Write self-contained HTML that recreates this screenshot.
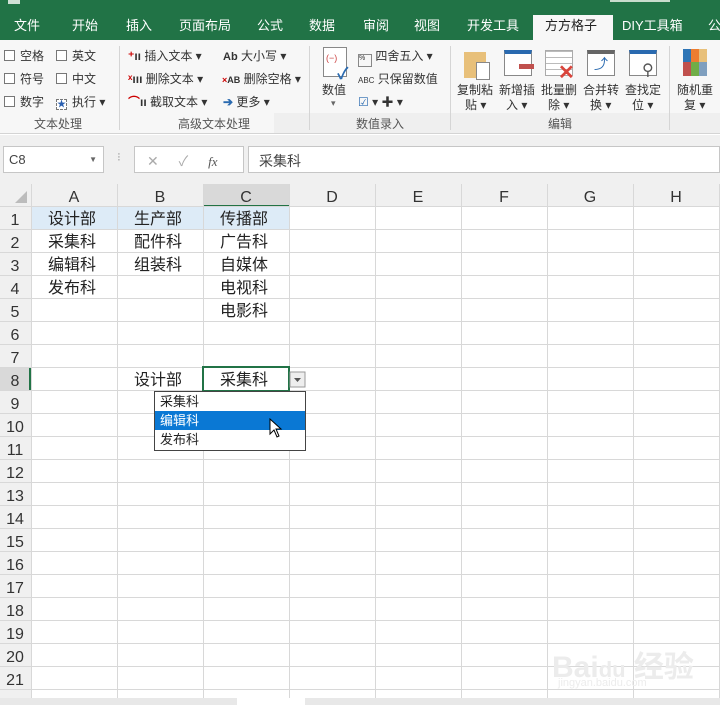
<!DOCTYPE html><html><head><meta charset="utf-8"><style>
*{margin:0;padding:0;box-sizing:border-box}
body{width:720px;height:705px;overflow:hidden;background:#fff;font-family:"Liberation Sans","Noto Sans CJK SC",sans-serif;position:relative;font-size:12px;color:#222}
.a{position:absolute}
.tab{position:absolute;top:8px;height:32px;line-height:36px;color:#fff;font-size:13px}
.rb{font-size:12px;color:#333;position:absolute;white-space:nowrap}
.cb{display:inline-block;width:11px;height:11px;border:1px solid #777;vertical-align:-1px;margin-right:5px;background:#fff}
.gl{position:absolute;top:115px;font-size:12px;color:#555}
.sep{position:absolute;top:46px;width:1px;height:84px;background:#d5d5d5}
.cell{position:absolute;font-size:16px;color:#222;height:23px;line-height:23px}
</style></head><body>
<div class="a" style="left:0;top:0;width:720px;height:40px;background:#217346"></div>
<div class="a" style="left:8px;top:0;width:12px;height:4px;background:#cfe0d5"></div>
<div class="a" style="left:610px;top:0;width:60px;height:2px;background:#c8dccd"></div>
<div class="tab" style="left:14px">文件</div>
<div class="tab" style="left:72px">开始</div>
<div class="tab" style="left:126px">插入</div>
<div class="tab" style="left:179px">页面布局</div>
<div class="tab" style="left:257px">公式</div>
<div class="tab" style="left:309px">数据</div>
<div class="tab" style="left:363px">审阅</div>
<div class="tab" style="left:414px">视图</div>
<div class="tab" style="left:467px">开发工具</div>
<div class="a" style="left:533px;top:15px;width:80px;height:27px;background:#f7f7f7"></div>
<div class="tab" style="left:545px;color:#222">方方格子</div>
<div class="tab" style="left:622px">DIY工具箱</div>
<div class="tab" style="left:708px">公</div>
<div class="a" style="left:0;top:40px;width:720px;height:94px;background:#f7f7f7;border-bottom:1px solid #d4d4d4"></div>
<div class="a" style="left:274px;top:113px;width:446px;height:20px;background:#efefef"></div>
<div class="rb" style="left:4px;top:47px"><span class="cb"></span>空格</div>
<div class="rb" style="left:4px;top:70px"><span class="cb"></span>符号</div>
<div class="rb" style="left:4px;top:93px"><span class="cb"></span>数字</div>
<div class="rb" style="left:56px;top:47px"><span class="cb"></span>英文</div>
<div class="rb" style="left:56px;top:70px"><span class="cb"></span>中文</div>
<div class="rb" style="left:56px;top:93px"><span class="cb" style="border-style:dashed;color:#2a5fb0;font-size:9px;line-height:9px;text-align:center">★</span>执行 ▾</div>
<div class="sep" style="left:119px"></div>
<div class="rb" style="left:128px;top:47px"><b style="color:#c00">⁺</b><b>ıı</b> 插入文本 ▾</div>
<div class="rb" style="left:128px;top:70px"><b style="color:#c00">ˣ</b><b>ııı</b> 删除文本 ▾</div>
<div class="rb" style="left:128px;top:93px"><b style="color:#c00">⌒</b><b>ıı</b> 截取文本 ▾</div>
<div class="rb" style="left:223px;top:47px"><b style="font-size:11px">Ab</b> 大小写 ▾</div>
<div class="rb" style="left:222px;top:70px"><b style="font-size:9px"><span style="color:#c00">×</span>AB</b> 删除空格 ▾</div>
<div class="rb" style="left:223px;top:93px"><b style="color:#2a6ab0">➔</b> 更多 ▾</div>
<div class="sep" style="left:309px"></div>
<div class="a" style="left:323px;top:47px;width:24px;height:30px;border:1px solid #888;background:#fff;color:#c44;font-size:9px;padding:5px 2px">(−)</div>
<div class="a" style="left:337px;top:60px;color:#2a6ab0;font-size:16px;font-weight:bold">✓</div>
<div class="rb" style="left:322px;top:81px">数值</div>
<div class="rb" style="left:331px;top:98px;font-size:9px;color:#666">▾</div>
<div class="rb" style="left:358px;top:47px"><span style="display:inline-block;width:14px;height:13px;border:1px solid #888;font-size:7px">%</span> 四舍五入 ▾</div>
<div class="rb" style="left:358px;top:70px"><span style="font-size:8px">ABC</span> 只保留数值</div>
<div class="rb" style="left:358px;top:93px"><span style="color:#2a6ab0">☑</span> ▾ <b>✚</b> ▾</div>
<div class="sep" style="left:450px"></div>
<div class="a" style="left:464px;top:52px;width:22px;height:26px;background:#e8c07a"></div>
<div class="a" style="left:476px;top:62px;width:14px;height:18px;background:#fff;border:1px solid #888"></div>
<div class="a" style="left:504px;top:50px;width:28px;height:26px;border:1px solid #888;border-top:4px solid #2a6ab0;background:#fff"></div>
<div class="a" style="left:519px;top:64px;width:15px;height:5px;background:#c0504d"></div>
<div class="a" style="left:545px;top:50px;width:28px;height:26px;border:1px solid #aaa;background:repeating-linear-gradient(0deg,#fff 0 5px,#bbb 5px 6px)"></div>
<div class="a" style="left:558px;top:60px;color:#d9443b;font-size:20px;font-weight:bold">✕</div>
<div class="a" style="left:587px;top:50px;width:28px;height:26px;border:1px solid #888;border-top:4px solid #666;background:#fff;color:#2a6ab0;font-size:14px;text-align:center">⤴</div>
<div class="a" style="left:629px;top:50px;width:28px;height:26px;border:1px solid #888;border-top:4px solid #2a6ab0;background:#fff"></div>
<div class="a" style="left:642px;top:60px;font-size:16px;color:#555">⚲</div>
<div class="rb" style="left:457px;top:81px">复制粘</div><div class="rb" style="left:465px;top:96px">贴 ▾</div>
<div class="rb" style="left:499px;top:81px">新增插</div><div class="rb" style="left:506px;top:96px">入 ▾</div>
<div class="rb" style="left:541px;top:81px">批量删</div><div class="rb" style="left:548px;top:96px">除 ▾</div>
<div class="rb" style="left:583px;top:81px">合并转</div><div class="rb" style="left:590px;top:96px">换 ▾</div>
<div class="rb" style="left:625px;top:81px">查找定</div><div class="rb" style="left:632px;top:96px">位 ▾</div>
<div class="sep" style="left:669px"></div>
<div class="a" style="left:683px;top:49px;width:24px;height:27px;background:linear-gradient(90deg,#2e75b6 0 33%,#ed7d31 33% 66%,#e8c07a 66%)"></div>
<div class="a" style="left:683px;top:62px;width:24px;height:14px;background:linear-gradient(90deg,#c0504d 0 33%,#70ad47 33% 66%,#7f9fbf 66%)"></div>
<div class="rb" style="left:677px;top:81px">随机重</div><div class="rb" style="left:684px;top:96px">复 ▾</div>
<div class="gl" style="left:34px">文本处理</div>
<div class="gl" style="left:178px">高级文本处理</div>
<div class="gl" style="left:356px">数值录入</div>
<div class="gl" style="left:548px">编辑</div>
<div class="a" style="left:0;top:135px;width:720px;height:50px;background:#f0f0f0"></div>
<div class="a" style="left:3px;top:146px;width:101px;height:27px;background:#fff;border:1px solid #c6c6c6;padding:5px 5px;font-size:13px;color:#444">C8<span style="position:absolute;right:6px;font-size:8px;color:#666;top:8px">▼</span></div>
<div class="a" style="left:117px;top:150px;color:#aaa">⁝</div>
<div class="a" style="left:134px;top:146px;width:110px;height:27px;background:#fff;border:1px solid #c6c6c6;color:#aaa;font-size:14px;padding:4px 12px;word-spacing:16px">✕ ✓ <i style="color:#555;font-family:'Liberation Serif';font-size:13px">fx</i></div>
<div class="a" style="left:248px;top:146px;width:472px;height:27px;background:#fff;border:1px solid #c6c6c6;padding:4px 10px;font-size:14px;color:#444">采集科</div>
<svg class="a" style="left:0;top:184px" width="720" height="521">
<rect width="720" height="521" fill="#fff"/>
<rect x="0" y="0" width="720" height="23" fill="#f0f0f0"/>
<rect x="0" y="0" width="31" height="521" fill="#f0f0f0"/>
<rect x="203" y="0" width="86" height="23" fill="#d9d9d9"/>
<rect x="203" y="21" width="86" height="2" fill="#217346"/>
<rect x="0" y="184" width="31" height="23" fill="#d9d9d9"/>
<rect x="29" y="184" width="2" height="23" fill="#217346"/>
<rect x="31" y="23" width="258" height="23" fill="#ddebf7"/>
<polygon points="27,19 27,7 15,19" fill="#bcbcbc"/>
<g stroke="#d8d8d8" stroke-width="1">
<line x1="0" x2="720" y1="22.5" y2="22.5"/>
<line x1="31.5" x2="31.5" y1="0" y2="521"/>
<line x1="117.5" x2="117.5" y1="0" y2="521"/><line x1="203.5" x2="203.5" y1="0" y2="521"/><line x1="289.5" x2="289.5" y1="0" y2="521"/><line x1="375.5" x2="375.5" y1="0" y2="521"/><line x1="461.5" x2="461.5" y1="0" y2="521"/><line x1="547.5" x2="547.5" y1="0" y2="521"/><line x1="633.5" x2="633.5" y1="0" y2="521"/><line x1="719.5" x2="719.5" y1="0" y2="521"/>
<line x1="0" x2="720" y1="45.5" y2="45.5"/><line x1="0" x2="720" y1="68.5" y2="68.5"/><line x1="0" x2="720" y1="91.5" y2="91.5"/><line x1="0" x2="720" y1="114.5" y2="114.5"/><line x1="0" x2="720" y1="137.5" y2="137.5"/><line x1="0" x2="720" y1="160.5" y2="160.5"/><line x1="0" x2="720" y1="183.5" y2="183.5"/><line x1="0" x2="720" y1="206.5" y2="206.5"/><line x1="0" x2="720" y1="229.5" y2="229.5"/><line x1="0" x2="720" y1="252.5" y2="252.5"/><line x1="0" x2="720" y1="275.5" y2="275.5"/><line x1="0" x2="720" y1="298.5" y2="298.5"/><line x1="0" x2="720" y1="321.5" y2="321.5"/><line x1="0" x2="720" y1="344.5" y2="344.5"/><line x1="0" x2="720" y1="367.5" y2="367.5"/><line x1="0" x2="720" y1="390.5" y2="390.5"/><line x1="0" x2="720" y1="413.5" y2="413.5"/><line x1="0" x2="720" y1="436.5" y2="436.5"/><line x1="0" x2="720" y1="459.5" y2="459.5"/><line x1="0" x2="720" y1="482.5" y2="482.5"/><line x1="0" x2="720" y1="505.5" y2="505.5"/>
</g>
<g font-family="Liberation Sans" font-size="16" fill="#333" text-anchor="middle">
<text x="74" y="18">A</text><text x="160" y="18">B</text><text x="246" y="18">C</text><text x="332" y="18">D</text><text x="418" y="18">E</text><text x="504" y="18">F</text><text x="590" y="18">G</text><text x="676" y="18">H</text>
<text x="15" y="41">1</text><text x="15" y="64">2</text><text x="15" y="87">3</text><text x="15" y="110">4</text><text x="15" y="133">5</text><text x="15" y="156">6</text><text x="15" y="179">7</text><text x="15" y="202">8</text><text x="15" y="225">9</text><text x="15" y="248">10</text><text x="15" y="271">11</text><text x="15" y="294">12</text><text x="15" y="317">13</text><text x="15" y="340">14</text><text x="15" y="363">15</text><text x="15" y="386">16</text><text x="15" y="409">17</text><text x="15" y="432">18</text><text x="15" y="455">19</text><text x="15" y="478">20</text><text x="15" y="501">21</text>
</g>
<rect x="203" y="183" width="86" height="24" fill="none" stroke="#217346" stroke-width="2"/>
<rect x="290" y="188" width="15" height="15" fill="#eee" stroke="#999"/>
<polygon points="294,194 301,194 297.5,198" fill="#555"/>
<rect x="0" y="514" width="720" height="7" fill="#e8e8e8"/>
<rect x="237" y="514" width="68" height="7" fill="#fff"/>
</svg>
<div class="cell" style="left:48px;top:208px">设计部</div><div class="cell" style="left:134px;top:208px">生产部</div><div class="cell" style="left:220px;top:208px">传播部</div>
<div class="cell" style="left:48px;top:231px">采集科</div><div class="cell" style="left:134px;top:231px">配件科</div><div class="cell" style="left:220px;top:231px">广告科</div>
<div class="cell" style="left:48px;top:254px">编辑科</div><div class="cell" style="left:134px;top:254px">组装科</div><div class="cell" style="left:220px;top:254px">自媒体</div>
<div class="cell" style="left:48px;top:277px">发布科</div><div class="cell" style="left:220px;top:277px">电视科</div>
<div class="cell" style="left:220px;top:300px">电影科</div>
<div class="cell" style="left:134px;top:369px">设计部</div><div class="cell" style="left:220px;top:369px">采集科</div>
<div class="a" style="left:154px;top:391px;width:152px;height:60px;border:1px solid #444;background:#fff;font-size:13px">
<div style="height:19px;line-height:19px;padding-left:5px">采集科</div>
<div style="height:19px;line-height:19px;padding-left:5px;background:#0a78d4;color:#fff">编辑科</div>
<div style="height:19px;line-height:19px;padding-left:5px">发布科</div></div>
<svg class="a" style="left:269px;top:418px" width="14" height="22"><path d="M1 1 L1 16 L5 12 L8 19 L10 18 L7 11 L12 11 Z" fill="#fff" stroke="#000"/></svg>
<div class="a" style="left:552px;top:642px;font-size:30px;color:#ececec;font-weight:bold">Bai<span style="font-size:22px">du</span> 经验</div>
<div class="a" style="left:558px;top:677px;font-size:11px;color:#ececec">jingyan.baidu.com</div>
</body></html>
